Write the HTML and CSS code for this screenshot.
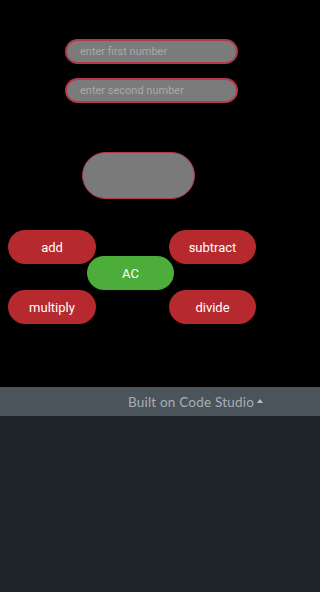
FILE: index.html
```html
<!DOCTYPE html>
<html>
<head>
<meta charset="utf-8">
<link rel="stylesheet" href="styles.css">
</head>
<body>
<div class="app">
  <div class="inputs">
    <input class="num" type="text" placeholder="enter first number">
    <input class="num" type="text" placeholder="enter second number">
  </div>
  <div class="result"></div>
  <div class="pad">
    <button class="btn red add">add</button>
    <button class="btn red sub">subtract</button>
    <button class="btn green ac">AC</button>
    <button class="btn red mul">multiply</button>
    <button class="btn red div">divide</button>
  </div>
</div>
<div class="footer">
  <div class="footer-inner">
    <span class="built">Built on Code Studio</span><span class="tri"></span>
  </div>
</div>
</body>
</html>
```
FILE: styles.css
```css
html, body { margin: 0; padding: 0; }
body {
  background: #1e262c;
  min-height: 592px;
  font-family: Roboto, "Liberation Sans", sans-serif;
}
.app {
  background: #000;
  height: 387px;
  box-sizing: border-box;
  padding-top: 39px;
}
.inputs {
  display: flex;
  flex-direction: column;
  align-items: flex-start;
  gap: 14px;
  padding-left: 65px;
}
.num {
  box-sizing: border-box;
  width: 173px;
  height: 25px;
  margin: 0;
  border: 2px solid #b4394a;
  border-radius: 13px;
  background: #7b7b7b;
  padding: 0 0 0 13px;
  font-family: Roboto, sans-serif;
  font-size: 11px;
  color: #ddd;
  outline: none;
}
.num::placeholder { color: #a9a9a9; }
.result {
  box-sizing: border-box;
  margin: 49px 0 0 82px;
  width: 113px;
  height: 47px;
  background: #7a7a7a;
  border: 1px solid #b03848;
  border-radius: 24px;
}
.pad {
  margin-top: 31px;
  display: grid;
  grid-template-columns: 8px 79px 9px 73px 5px 82px;
  grid-template-rows: 26px 8px 26px 34px;
}
.btn {
  box-sizing: border-box;
  width: 100%;
  height: 34px;
  margin: 0;
  border: none;
  border-radius: 17px;
  color: #fff;
  font-family: Roboto, sans-serif;
  font-size: 13px;
  padding: 0;
}
.red { background: #b5292f; }
.green { background: #4cad3b; }
.add { grid-column: 2 / 4; grid-row: 1 / 3; }
.sub { grid-column: 5 / 7; grid-row: 1 / 3; }
.ac { grid-column: 3 / 6; grid-row: 2 / 4; }
.mul { grid-column: 2 / 4; grid-row: 4 / 5; }
.div { grid-column: 5 / 7; grid-row: 4 / 5; }
.footer {
  background: #4b545a;
}
.footer-inner {
  width: 277px;
  height: 29px;
  box-sizing: border-box;
  display: flex;
  align-items: center;
  justify-content: flex-end;
  padding-right: 14px;
  gap: 3px;
  color: #a7afb4;
  font-family: Lato, "Open Sans", sans-serif;
  font-size: 13.5px;
  letter-spacing: 0.2px;
}
.tri {
  width: 0;
  height: 0;
  border-left: 3.5px solid transparent;
  border-right: 3.5px solid transparent;
  border-bottom: 4px solid #b8bfc3;
  margin-bottom: 2px;
}
```
